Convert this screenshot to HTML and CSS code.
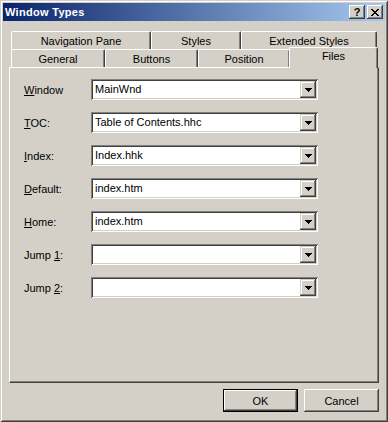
FILE: index.html
```html
<!DOCTYPE html>
<html lang="en">
<head>
    <meta charset="UTF-8">
    <title>Window Types</title>
    <link rel="stylesheet" href="styles.css">
</head>
<body>
    <div class="window">
        <div class="titlebar">
            <span class="title">Window Types</span>
            <div class="caption-buttons">
                <button class="cap-btn help">?</button>
                <button class="cap-btn">
                    <svg width="8" height="7" viewBox="0 0 8 7" shape-rendering="crispEdges">
                        <path d="M0 0h2v1H0zM6 0h2v1H6zM1 1h2v1H1zM5 1h2v1H5zM2 2h4v1H2zM3 3h2v1H3zM2 4h4v1H2zM1 5h2v1H1zM5 5h2v1H5zM0 6h2v1H0zM6 6h2v1H6z" fill="#000"/>
                    </svg>
                </button>
            </div>
        </div>

        <div class="client">
            <div class="tabs">
                <div class="tab-row">
                    <div class="tab tab-nav">Navigation Pane</div>
                    <div class="tab tab-styles">Styles</div>
                    <div class="tab tab-ext">Extended Styles</div>
                </div>
                <div class="tab-row">
                    <div class="tab tab-general">General</div>
                    <div class="tab tab-buttons">Buttons</div>
                    <div class="tab tab-position">Position</div>
                    <div class="tab tab-files active">Files</div>
                </div>
            </div>

            <div class="panel">
                <div class="field">
                    <label class="field-label"><u>W</u>indow</label>
                    <div class="combo">
                        <span class="combo-text">MainWnd</span>
                        <span class="combo-btn"><svg width="7" height="4" viewBox="0 0 7 4" shape-rendering="crispEdges"><path d="M0 0h7v1H0zM1 1h5v1H1zM2 2h3v1H2zM3 3h1v1H3z" fill="#000"/></svg></span>
                    </div>
                </div>
                <div class="field">
                    <label class="field-label"><u>T</u>OC:</label>
                    <div class="combo">
                        <span class="combo-text">Table of Contents.hhc</span>
                        <span class="combo-btn"><svg width="7" height="4" viewBox="0 0 7 4" shape-rendering="crispEdges"><path d="M0 0h7v1H0zM1 1h5v1H1zM2 2h3v1H2zM3 3h1v1H3z" fill="#000"/></svg></span>
                    </div>
                </div>
                <div class="field">
                    <label class="field-label"><u>I</u>ndex:</label>
                    <div class="combo">
                        <span class="combo-text">Index.hhk</span>
                        <span class="combo-btn"><svg width="7" height="4" viewBox="0 0 7 4" shape-rendering="crispEdges"><path d="M0 0h7v1H0zM1 1h5v1H1zM2 2h3v1H2zM3 3h1v1H3z" fill="#000"/></svg></span>
                    </div>
                </div>
                <div class="field">
                    <label class="field-label"><u>D</u>efault:</label>
                    <div class="combo">
                        <span class="combo-text">index.htm</span>
                        <span class="combo-btn"><svg width="7" height="4" viewBox="0 0 7 4" shape-rendering="crispEdges"><path d="M0 0h7v1H0zM1 1h5v1H1zM2 2h3v1H2zM3 3h1v1H3z" fill="#000"/></svg></span>
                    </div>
                </div>
                <div class="field">
                    <label class="field-label"><u>H</u>ome:</label>
                    <div class="combo">
                        <span class="combo-text">index.htm</span>
                        <span class="combo-btn"><svg width="7" height="4" viewBox="0 0 7 4" shape-rendering="crispEdges"><path d="M0 0h7v1H0zM1 1h5v1H1zM2 2h3v1H2zM3 3h1v1H3z" fill="#000"/></svg></span>
                    </div>
                </div>
                <div class="field">
                    <label class="field-label">Jump <u>1</u>:</label>
                    <div class="combo">
                        <span class="combo-text"></span>
                        <span class="combo-btn"><svg width="7" height="4" viewBox="0 0 7 4" shape-rendering="crispEdges"><path d="M0 0h7v1H0zM1 1h5v1H1zM2 2h3v1H2zM3 3h1v1H3z" fill="#000"/></svg></span>
                    </div>
                </div>
                <div class="field">
                    <label class="field-label">Jump <u>2</u>:</label>
                    <div class="combo">
                        <span class="combo-text"></span>
                        <span class="combo-btn"><svg width="7" height="4" viewBox="0 0 7 4" shape-rendering="crispEdges"><path d="M0 0h7v1H0zM1 1h5v1H1zM2 2h3v1H2zM3 3h1v1H3z" fill="#000"/></svg></span>
                    </div>
                </div>
            </div>

            <div class="actions">
                <button class="btn default">OK</button>
                <button class="btn">Cancel</button>
            </div>
        </div>
    </div>
</body>
</html>
```

FILE: styles.css
```css
body {
    margin: 0;
    background: #d4d0c8;
    font-family: "Liberation Sans", Arial, sans-serif;
    font-size: 11px;
    color: #000;
}

.window {
    width: 388px;
    height: 422px;
    box-sizing: border-box;
    padding: 3px;
    background: #d4d0c8;
    box-shadow: inset 1px 1px #d4d0c8, inset -1px -1px #404040,
                inset 2px 2px #fff, inset -2px -2px #808080;
    display: flex;
    flex-direction: column;
}

.titlebar {
    height: 18px;
    display: flex;
    align-items: center;
    padding: 0 2px 0 2px;
    background: linear-gradient(to right, #0a246a, #a6caf0);
}

.title {
    flex: 1;
    color: #fff;
    font-weight: bold;
    letter-spacing: 0.3px;
}

.caption-buttons {
    display: flex;
    gap: 2px;
}

.cap-btn {
    width: 16px;
    height: 14px;
    padding: 0;
    border: none;
    background: #d4d0c8;
    box-shadow: inset -1px -1px #404040, inset 1px 1px #fff, inset -2px -2px #808080;
    display: flex;
    align-items: center;
    justify-content: center;
    font-family: "Liberation Sans", Arial, sans-serif;
    font-size: 11px;
    font-weight: bold;
    color: #000;
}

.cap-btn.help {
    padding-bottom: 1px;
}

.client {
    flex: 1;
    padding: 10px 6px 0 6px;
    display: flex;
    flex-direction: column;
}

.tabs {
    padding-left: 2px;
}

.tab-row {
    display: flex;
    height: 18px;
}

.tab {
    box-sizing: border-box;
    height: 18px;
    border-top: 1px solid #fff;
    border-left: 1px solid #fff;
    border-right: 1px solid #404040;
    border-radius: 2px 2px 0 0;
    box-shadow: inset -1px 0 #808080;
    background: #d4d0c8;
    text-align: center;
    line-height: 18px;
    white-space: nowrap;
}

.tab-nav { width: 140px; }
.tab-styles { width: 90px; }
.tab-ext { width: 136px; }
.tab-general { width: 94px; }
.tab-buttons { width: 93px; }
.tab-position { width: 92px; }
.tab-files { width: 87px; }

.tab.active {
    position: relative;
    z-index: 1;
    width: 89px;
    height: 21px;
    margin: -2px -1px 0 -1px;
    line-height: 17px;
}

.panel {
    height: 316px;
    box-sizing: border-box;
    border: 1px solid;
    border-color: #fff #404040 #404040 #fff;
    box-shadow: inset -1px -1px #808080;
    padding: 11px 0 0 14px;
}

.field {
    display: flex;
    align-items: center;
    height: 21px;
    margin-bottom: 12px;
}

.field-label {
    width: 67px;
}

.combo {
    width: 227px;
    height: 21px;
    box-sizing: border-box;
    padding: 2px;
    display: flex;
    background: #fff;
    box-shadow: inset 1px 1px #808080, inset -1px -1px #fff,
                inset 2px 2px #404040, inset -2px -2px #d4d0c8;
}

.combo-text {
    flex: 1;
    padding-left: 2px;
    line-height: 17px;
    white-space: nowrap;
}

.combo-btn {
    width: 16px;
    height: 17px;
    display: flex;
    align-items: center;
    justify-content: center;
    background: #d4d0c8;
    box-shadow: inset -1px -1px #404040, inset 1px 1px #d4d0c8,
                inset -2px -2px #808080, inset 2px 2px #fff;
}

.actions {
    display: flex;
    justify-content: flex-end;
    gap: 6px;
    padding-top: 6px;
}

.btn {
    width: 75px;
    height: 23px;
    padding: 0;
    border: none;
    background: #d4d0c8;
    font-family: "Liberation Sans", Arial, sans-serif;
    font-size: 11px;
    color: #000;
    box-shadow: inset -1px -1px #404040, inset 1px 1px #fff, inset -2px -2px #808080;
}

.btn.default {
    box-shadow: inset 0 0 0 1px #000, inset -2px -2px #404040,
                inset 2px 2px #fff, inset -3px -3px #808080;
}
```
